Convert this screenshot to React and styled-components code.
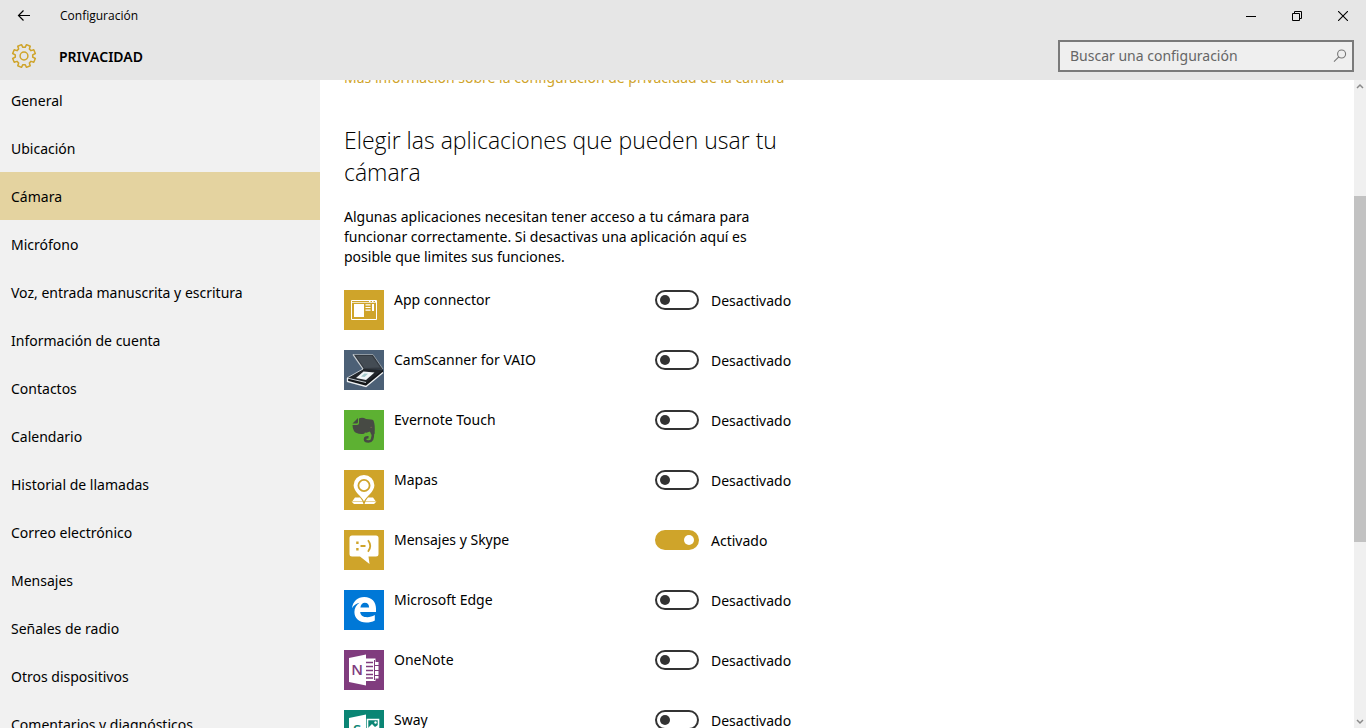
import { useState } from "react";
import styled, { createGlobalStyle } from "styled-components";

const sections = [
  "General",
  "Ubicación",
  "Cámara",
  "Micrófono",
  "Voz, entrada manuscrita y escritura",
  "Información de cuenta",
  "Contactos",
  "Calendario",
  "Historial de llamadas",
  "Correo electrónico",
  "Mensajes",
  "Señales de radio",
  "Otros dispositivos",
  "Comentarios y diagnósticos",
];

// outline of an eight-tooth cog around 0,0
const gearPoints = Array.from({ length: 8 }, (_, i) => i * 45 + 22.5)
  .flatMap((angle) => [
    [angle - 15, 8.8],
    [angle - 10, 11.6],
    [angle + 10, 11.6],
    [angle + 15, 8.8],
  ])
  .map(([angle, r]) => {
    const rad = (angle * Math.PI) / 180;
    return `${(r * Math.cos(rad)).toFixed(2)},${(r * Math.sin(rad)).toFixed(2)}`;
  })
  .join(" ");

const GearIcon = () => (
  <svg width="26" height="26" viewBox="-13 -13 26 26" aria-hidden="true">
    <g fill="none" stroke="#cfa42a" strokeWidth="1.5" strokeLinejoin="round">
      <polygon points={gearPoints} />
      <circle r="3.9" />
    </g>
  </svg>
);

const BackIcon = () => (
  <svg width="14" height="12" viewBox="0 0 14 12" aria-hidden="true">
    <path d="M13 5.5H1.5M6.5.5l-5 5 5 5" fill="none" stroke="#000" strokeWidth="1.2" />
  </svg>
);

const SearchIcon = () => (
  <svg width="14" height="14" viewBox="0 0 14 14" aria-hidden="true">
    <g fill="none" stroke="#777" strokeWidth="1.1">
      <circle cx="8.6" cy="5" r="4" />
      <path d="M5.8 7.9L1 12.7" />
    </g>
  </svg>
);

const MinimizeIcon = () => (
  <svg width="10" height="10" viewBox="0 0 10 10" aria-hidden="true">
    <path d="M0 5.5h10" stroke="#000" />
  </svg>
);

const RestoreIcon = () => (
  <svg width="10" height="10" viewBox="0 0 10 10" aria-hidden="true">
    <path d="M.5 2.5h7v7h-7zM2.5 2.5v-2h7v7h-2" fill="none" stroke="#000" />
  </svg>
);

const CloseIcon = () => (
  <svg width="10" height="10" viewBox="0 0 10 10" aria-hidden="true">
    <path d="M0 0l10 10M10 0L0 10" stroke="#000" strokeWidth="1.1" />
  </svg>
);

const ConnectorArt = () => (
  <>
    <path d="M7.5 10.5h25v19h-25z" fill="none" stroke="#fff" />
    <path d="M8 12.5h24" stroke="#fff" strokeOpacity=".7" />
    <path d="M25 11.5h1.5M28 11.5h1.5M31 11.5h1" stroke="#fff" />
    <path d="M10 14h10v13H10zM28 14h2v7h-2z" fill="#fff" />
    <path d="M21.5 14.8h5M21.5 17.5h5M21.5 20.2h5" stroke="#fff" strokeWidth="1.2" />
  </>
);

const ScannerArt = () => (
  <>
    <path d="M9 4.500h20l10 14.500-20 1z" fill="#343a41" />
    <path d="M12 6h16l8 11.500-15.500.5z" fill="#444c54" />
    <path d="M9 4.500h20l10 14.500" fill="none" stroke="#8f99a2" />
    <path d="M9 4.500L19 19" stroke="#cdd3d8" strokeWidth="1.300" />
    <path d="M3 28l16-9 20 .5L22 33z" fill="#22262a" />
    <path d="M12 28l7.500-6.500 11 1L22 30z" fill="#f2f6f7" />
    <path d="M17 26.500l3.500-3 3.500.3-3.500 3.200z" fill="#a5c9ca" />
    <path d="M3 28l19 4.500L39 19.500V23L22 36.500 4 31.500z" fill="#14171a" />
    <path d="M19 19L3 28l19 4.500" fill="none" stroke="#c3cad0" />
    <path d="M3.500 28v3.500l18.500 5L39 22.500" fill="none" stroke="#eef1f3" strokeWidth="1.300" />
  </>
);

const ElephantArt = () => (
  <>
    <path d="M8.500 13.500L14 8v4q0 1.500-1.500 1.500z" fill="#474a44" />
    <path
      d="M15 8.500q3.500-1.500 7 .5 6 0 7.500 1.500 2 5 1 13.500l-3.500.5q0-2-1.500-3-2 1.500-4.500 1-.5 2-3.500 1.500-6-.5-7.500-3-1.500-2.500-1.500-6H13q2 0 2-2z"
      fill="#474a44"
    />
    <path
      d="M29 22q0 5-1 7.500-1 2-3.500 2-3.500 0-3.500-2.300 0-2.200 3.500-2"
      fill="none"
      stroke="#474a44"
      strokeWidth="2.600"
    />
    <path d="M26 17.500c.4-1.100 2-1 2.400.3z" fill="#7d664c" />
  </>
);

const MapArt = () => (
  <>
    <path d="M11 27.500h5l2.500 3.500H8.500zM29 27.500h-5L21.500 31h10zM7.500 31.500h11l1 2.500H10zM32.500 31.500h-11l-1 2.500H30z" fill="#fff" />
    <path
      d="M20 31.500c-2.200-5-10.400-9.700-10.400-16.200a10.400 10.400 0 0 1 20.800 0c0 6.500-8.200 11.200-10.400 16.200z"
      fill="#fff"
    />
    <circle cx="20" cy="15.500" r="5.600" fill="none" stroke="#cfa42a" strokeWidth="1.800" />
  </>
);

const MessageArt = () => (
  <>
    <path d="M8 5.5h24q2.500 0 2.500 2.500v16q0 2.500-2.500 2.500h-7.500l1 7.500L16 26.500H8q-2.500 0-2.500-2.500V8q0-2.500 2.500-2.500z" fill="#fff" />
    <path d="M12.200 11.500h2.400v2.400h-2.400zM12.200 18h2.400v2.400h-2.400z" fill="#cfa42a" />
    <path d="M16.500 16h5M24 10.300q4.500 5.700 0 11.400" fill="none" stroke="#cfa42a" strokeWidth="1.800" />
  </>
);

const EdgeArt = () => (
  <path
    d="M8 18.300C8.800 11.300 13.700 7 20.300 7 27.800 7 32 12 32 18.500V22H16.200c.2 3.500 3.200 5.200 7 5.200 2.800 0 5.200-.7 7.600-2.100v5.300c-2.500 1.400-5.400 2.100-8.700 2.100-7 0-11.700-4-11.700-10.400 0-4 1.900-7.200 5.200-9.300-3.500.8-6 2.800-7.600 5.500zm8.400-.9h8.700c0-2.800-1.500-4.700-4.300-4.700-2.300 0-4 1.800-4.400 4.700z"
    fill="#fff"
  />
);

const LetterText = styled.text`
  font-family: "Open Sans", sans-serif;
  font-size: 15px;
  font-weight: 600;
  text-anchor: middle;
`;

const OneNoteArt = () => (
  <>
    <path d="M22 8.500h9.500v3.500h3v16.500h-3V31H22" fill="#fff" />
    <path d="M22 12.500h7M22 16.500h7M22 20.500h7M22 24.500h7M22 28h7" stroke="#803c7e" strokeWidth="1.700" />
    <path d="M30.500 10v20M31 15.500h4M31 20.500h4M31 25.500h4" stroke="#803c7e" />
    <path d="M5 8l17-3.500v31L5 32z" fill="#fff" />
    <LetterText x="13" y="25" fill="#803c7e">N</LetterText>
  </>
);

const SwayArt = () => (
  <>
    <path d="M23.500 9.500h11v18h-11z" fill="none" stroke="#fff" strokeWidth="1.600" />
    <path d="M24 18l4-4 3 3 3-2v9H24z" fill="#fff" />
    <circle cx="31.500" cy="12.500" r="1.200" fill="#fff" />
    <path d="M5 8l17-3.500v31L5 32z" fill="#fff" />
    <LetterText x="13" y="25" fill="#0a8574">S</LetterText>
  </>
);

const apps = [
  { name: "App connector", color: "#cfa42a", Art: ConnectorArt },
  { name: "CamScanner for VAIO", color: "#4c6076", Art: ScannerArt },
  { name: "Evernote Touch", color: "#5db132", Art: ElephantArt },
  { name: "Mapas", color: "#cfa42a", Art: MapArt },
  { name: "Mensajes y Skype", color: "#cfa42a", Art: MessageArt, on: true },
  { name: "Microsoft Edge", color: "#0078d7", Art: EdgeArt },
  { name: "OneNote", color: "#803c7e", Art: OneNoteArt },
  { name: "Sway", color: "#0a8574", Art: SwayArt },
];

const AppRow = ({ name, color, Art, on = false }) => {
  const [enabled, setEnabled] = useState(on);

  return (
    <Row>
      <AppTile viewBox="0 0 40 40" $color={color} aria-hidden="true">
        <Art />
      </AppTile>
      <AppName>{name}</AppName>
      <ToggleLabel>
        <Toggle
          type="checkbox"
          role="switch"
          aria-label={name}
          checked={enabled}
          onChange={(e) => setEnabled(e.target.checked)}
        />
        {enabled ? "Activado" : "Desactivado"}
      </ToggleLabel>
    </Row>
  );
};

const App = () => {
  const [current, setCurrent] = useState("Cámara");
  const [query, setQuery] = useState("");

  return (
    <Window>
      <GlobalStyle />
      <TitleBar>
        <BackButton type="button" aria-label="Atrás">
          <BackIcon />
        </BackButton>
        <WindowTitle>Configuración</WindowTitle>
        <WindowButton type="button" aria-label="Minimizar">
          <MinimizeIcon />
        </WindowButton>
        <WindowButton type="button" aria-label="Restaurar">
          <RestoreIcon />
        </WindowButton>
        <WindowButton type="button" aria-label="Cerrar">
          <CloseIcon />
        </WindowButton>
      </TitleBar>
      <Header>
        <GearIcon />
        <PageTitle>PRIVACIDAD</PageTitle>
        <SearchBox>
          <SearchInput
            type="text"
            aria-label="Buscar una configuración"
            placeholder="Buscar una configuración"
            value={query}
            onChange={(e) => setQuery(e.target.value)}
          />
          <SearchIcon />
        </SearchBox>
      </Header>
      <Body>
        <Sidebar>
          <NavList>
            {sections.map((section) => (
              <li key={section}>
                <NavLink
                  href="#"
                  $active={section === current}
                  onClick={() => setCurrent(section)}
                >
                  {section}
                </NavLink>
              </li>
            ))}
          </NavList>
        </Sidebar>
        <Content>
          <Article>
            <InfoLink href="#">
              Más información sobre la configuración de privacidad de la cámara
            </InfoLink>
            <Heading>Elegir las aplicaciones que pueden usar tu cámara</Heading>
            <Description>
              Algunas aplicaciones necesitan tener acceso a tu cámara para
              funcionar correctamente. Si desactivas una aplicación aquí es
              posible que limites sus funciones.
            </Description>
            <AppList>
              {apps.map((app) => (
                <AppRow key={app.name} {...app} />
              ))}
            </AppList>
          </Article>
        </Content>
        <ScrollBar aria-hidden="true">
          <ScrollArrow viewBox="0 0 12 12">
            <path d="M3 8l3-3 3 3" />
          </ScrollArrow>
          <ScrollSpace $grow={104} />
          <ScrollThumb $grow={346} />
          <ScrollSpace $grow={174} />
          <ScrollArrow viewBox="0 0 12 12">
            <path d="M3 4l3 3 3-3" />
          </ScrollArrow>
        </ScrollBar>
      </Body>
    </Window>
  );
};
export default App;

const GlobalStyle = createGlobalStyle`
  * {
    box-sizing: border-box;
  }

  body {
    margin: 0;
    overflow: hidden;
    background-color: #fff;
    color: #000;
    font-family: "Noto Sans", "Open Sans", sans-serif;
    font-size: 14px;
    line-height: 20px;
  }

  button,
  input {
    font: inherit;
  }
`;

const Window = styled.div`
  display: flex;
  flex-direction: column;
  height: 100vh;
`;

const TitleBar = styled.div`
  display: flex;
  align-items: center;
  flex-shrink: 0;
  height: 32px;
  background-color: #e6e6e6;
`;

const WindowButton = styled.button`
  display: flex;
  align-items: center;
  justify-content: center;
  width: 46px;
  height: 32px;
  padding: 0;
  border: none;
  background: transparent;
`;

const BackButton = styled(WindowButton)`
  width: 48px;
`;

const WindowTitle = styled.span`
  flex: 1;
  padding-left: 12px;
  font-family: "Open Sans", sans-serif;
  font-size: 12px;
`;

const Header = styled.header`
  display: flex;
  align-items: center;
  flex-shrink: 0;
  height: 48px;
  padding: 0 12px 0 11px;
  background-color: #e6e6e6;
`;

const PageTitle = styled.h1`
  flex: 1;
  margin: 0;
  padding: 2px 0 0 22px;
  font-size: 14px;
  font-weight: 600;
`;

const SearchBox = styled.div`
  display: flex;
  align-items: center;
  width: 296px;
  height: 32px;
  padding: 0 5px 0 10px;
  border: 2px solid #7a7a7a;
  background-color: #efefef;
`;

const SearchInput = styled.input`
  flex: 1;
  min-width: 0;
  padding: 0;
  border: none;
  outline: none;
  background: transparent;

  &::placeholder {
    color: #666;
  }
`;

const Body = styled.div`
  display: flex;
  flex: 1;
  min-height: 0;
`;

const Sidebar = styled.nav`
  flex-shrink: 0;
  width: 320px;
  overflow: hidden;
  background-color: #f1f1f1;
`;

/* list is scrolled a little past its top */
const NavList = styled.ul`
  margin: -4px 0 0;
  padding: 0;
  list-style: none;
`;

const NavLink = styled.a`
  display: flex;
  align-items: center;
  height: 48px;
  padding: 2px 11px 0;
  color: inherit;
  text-decoration: none;
  background-color: ${({ $active }) => ($active ? "#e4d3a0" : "transparent")};
`;

const Content = styled.main`
  flex: 1;
  overflow: hidden;
  padding: 0 24px;
`;

const Article = styled.div`
  max-width: 456px;
  margin-top: -12px;
`;

const InfoLink = styled.a`
  display: block;
  color: #cfa42a;
  text-decoration: none;
  white-space: nowrap;
`;

const Heading = styled.h2`
  margin: 36px 0 19px;
  font-family: "Open Sans", sans-serif;
  font-size: 23px;
  font-weight: 300;
  line-height: 32px;
`;

const Description = styled.p`
  max-width: 420px;
  margin: 0 0 23px;
`;

const AppList = styled.ul`
  display: flex;
  flex-direction: column;
  gap: 20px;
  margin: 0;
  padding: 0;
  list-style: none;
`;

const Row = styled.li`
  display: grid;
  grid-template-columns: 40px 251px 1fr;
  column-gap: 10px;
  align-items: start;
  height: 40px;
`;

const AppTile = styled.svg`
  width: 40px;
  height: 40px;
  background-color: ${({ $color }) => $color};
`;

const AppName = styled.span`
  white-space: nowrap;
`;

const ToggleLabel = styled.label`
  display: flex;
  align-items: flex-start;
  gap: 12px;
  line-height: 22px;
`;

const Toggle = styled.input`
  appearance: none;
  display: flex;
  align-items: center;
  flex-shrink: 0;
  width: 44px;
  height: 20px;
  margin: 0;
  padding: 0 3px;
  border: 2px solid #333;
  border-radius: 10px;

  &::before {
    content: "";
    width: 10px;
    height: 10px;
    border-radius: 50%;
    background-color: #333;
  }

  &:checked {
    justify-content: flex-end;
    border-color: #cfa42a;
    background-color: #cfa42a;
  }

  &:checked::before {
    background-color: #fff;
  }
`;

const ScrollBar = styled.div`
  display: flex;
  flex-direction: column;
  flex-shrink: 0;
  width: 12px;
  background-color: #f0f0f0;
`;

const ScrollArrow = styled.svg`
  flex-shrink: 0;
  width: 12px;
  height: 12px;
  fill: none;
  stroke: #8a8a8a;
  stroke-width: 1.5;
`;

const ScrollSpace = styled.div`
  flex: ${({ $grow }) => $grow};
`;

const ScrollThumb = styled(ScrollSpace)`
  background-color: #c2c2c2;
`;
